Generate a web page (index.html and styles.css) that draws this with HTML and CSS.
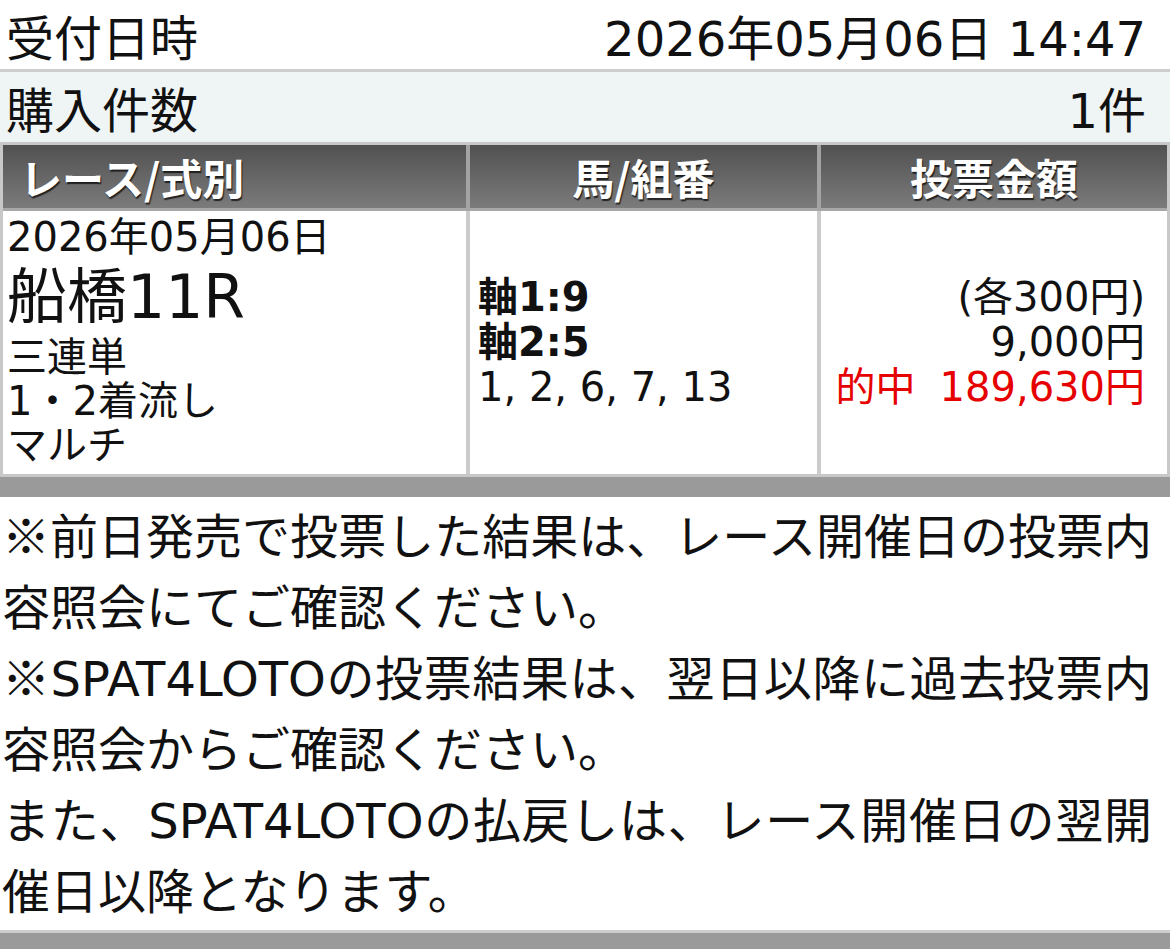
FILE: index.html
```html
<!DOCTYPE html>
<html lang="ja">
<head>
<meta charset="utf-8">
<title>投票結果</title>
<link rel="stylesheet" href="styles.css">
</head>
<body>
<main class="receipt">
  <div class="info-row">
    <span class="info-label">受付日時</span>
    <span class="info-value">2026年05月06日 14:47</span>
  </div>
  <div class="info-row info-row--alt">
    <span class="info-label">購入件数</span>
    <span class="info-value">1件</span>
  </div>
  <div class="bet-table">
    <div class="th th--left">レース/式別</div>
    <div class="th">馬/組番</div>
    <div class="th th--last">投票金額</div>
    <div class="td td-race">
      <div class="race-date">2026年05月06日</div>
      <div class="race-name">船橋11R</div>
      <div class="race-line">三連単</div>
      <div class="race-line">1・2着流し</div>
      <div class="race-line">マルチ</div>
    </div>
    <div class="td td-horse">
      <div class="horse-axis">軸1:9</div>
      <div class="horse-axis">軸2:5</div>
      <div>1, 2, 6, 7, 13</div>
    </div>
    <div class="td td-amount td--last">
      <div>(各300円)</div>
      <div>9,000円</div>
      <div class="hit">的中<span class="hit-amount">189,630円</span></div>
    </div>
  </div>
  <div class="section-bar"></div>
  <div class="notes">
    <p><span class="mark">※</span>前日発売で投票した結果は、レース開催日の投票内容照会にてご確認ください。</p>
    <p><span class="mark">※</span>SPAT4LOTOの投票結果は、翌日以降に過去投票内容照会からご確認ください。</p>
    <p>また、SPAT4LOTOの払戻しは、レース開催日の翌開催日以降となります。</p>
  </div>
  <div class="footer-bar"></div>
</main>
</body>
</html>
```
FILE: styles.css
```css
html, body {
  margin: 0;
  padding: 0;
  background: #fff;
}

body {
  font-family: "DejaVu Sans", "Noto Sans CJK JP", sans-serif;
  color: #111;
}

.receipt {
  width: 1170px;
}

.info-row {
  display: flex;
  justify-content: space-between;
  align-items: center;
  height: 69px;
  padding: 0 24px 0 6px;
  font-size: 48px;
  border-bottom: 3px solid #cdcdcd;
}

.info-row--alt {
  height: 70px;
  background: #eff4f5;
  border-bottom: none;
}

.bet-table {
  display: grid;
  grid-template-columns: 467px 351px 1fr;
  border: 3px solid #c8c8c8;
}

.th {
  box-sizing: border-box;
  height: 66px;
  display: flex;
  align-items: center;
  justify-content: center;
  background: linear-gradient(#515151, #7b7b7b);
  border-right: 4px solid #a3a3a3;
  border-bottom: 3px solid #a8a8a8;
  color: #fff;
  font-family: "Noto Sans CJK JP", sans-serif;
  font-size: 42px;
  font-weight: 700;
  text-shadow: 1px 2px 1px rgba(0, 0, 0, 0.7);
}

.th--left {
  justify-content: flex-start;
  padding-left: 17px;
}

.th--last {
  border-right: none;
}

.td {
  box-sizing: border-box;
  height: 263px;
  background: #fff;
  border-right: 4px solid #cbcbcb;
}

.td--last {
  border-right: none;
}

.td-race {
  padding: 4px 4px 0 4px;
}

.race-date,
.race-line {
  font-size: 40px;
  line-height: 44px;
}

.race-name {
  font-size: 60px;
  line-height: 76px;
}

.td-horse,
.td-amount {
  display: flex;
  flex-direction: column;
  justify-content: center;
  font-size: 40px;
  line-height: 45px;
}

.td-horse {
  padding-left: 8px;
}

.horse-axis {
  font-weight: 700;
}

.td-amount {
  align-items: flex-end;
  padding-right: 22px;
}

.hit {
  color: #e60000;
}

.hit-amount {
  margin-left: 24px;
}

.section-bar {
  height: 20px;
  background: #9a9a9a;
}

.notes {
  padding: 5px 18px 2px 2px;
  font-size: 48px;
  line-height: 71px;
  text-align: justify;
}

.notes p {
  margin: 0;
}

.mark {
  font-family: "Noto Sans CJK JP", sans-serif;
  font-weight: 300;
  line-height: 1;
}

.footer-bar {
  height: 20px;
  border-top: 3px solid #cdcdcd;
  background: #9a9a9a;
}
```
